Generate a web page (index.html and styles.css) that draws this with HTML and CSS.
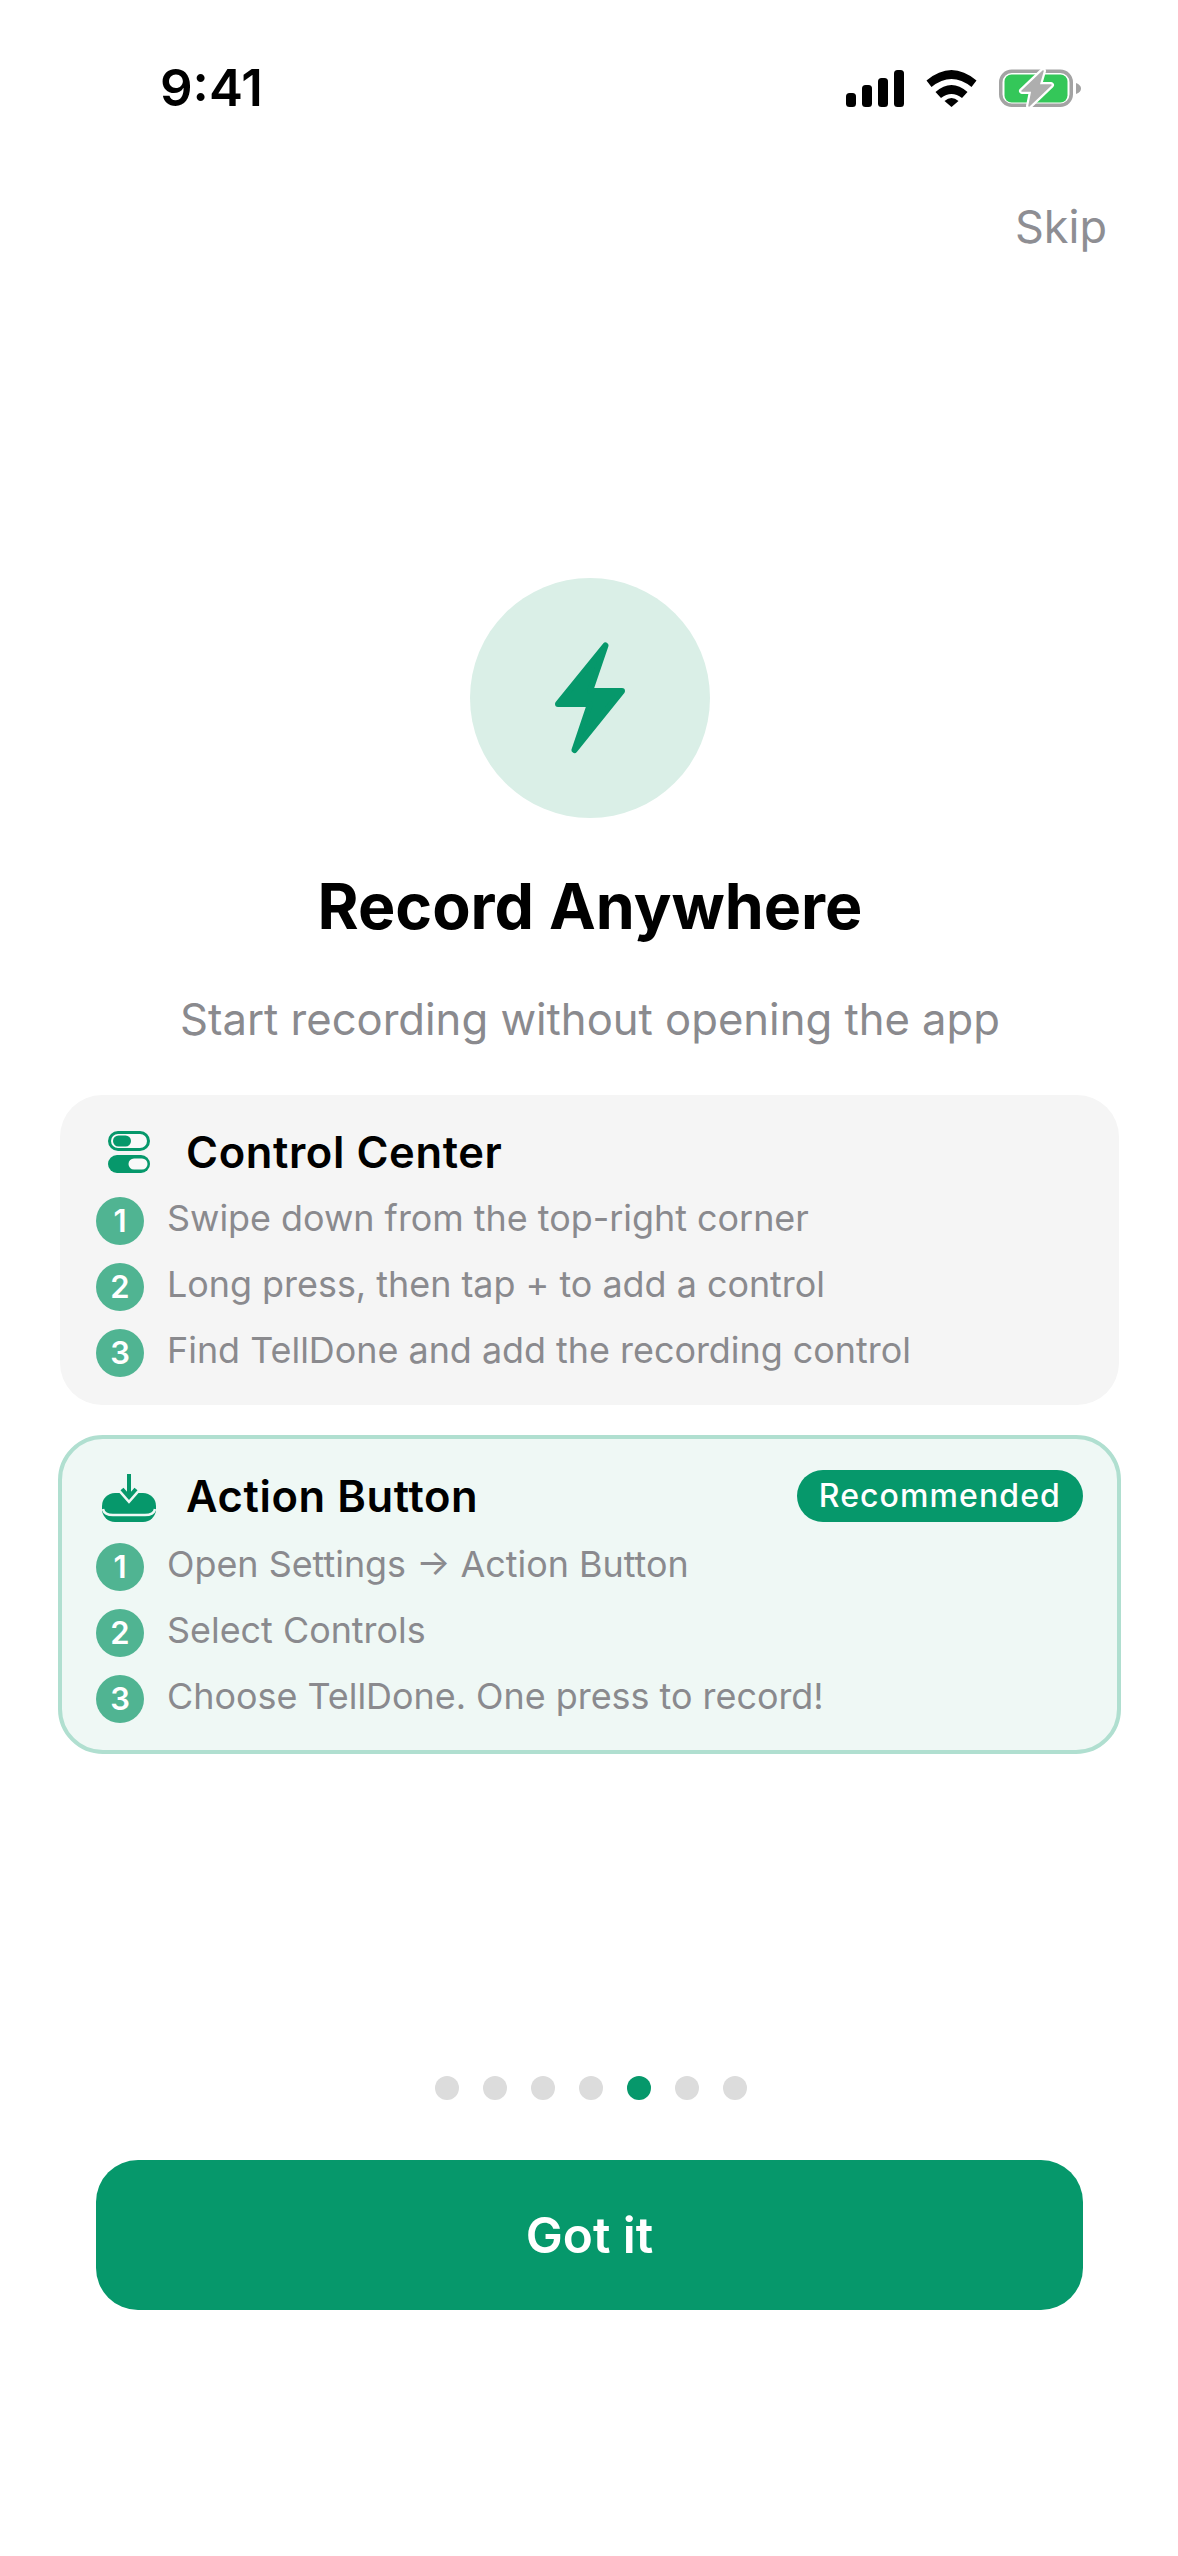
FILE: index.html
```html
<!DOCTYPE html>
<html>
<head>
	<title>Record Anywhere</title>
	<link rel="stylesheet" href="styles.css">
</head>
<body>
	<div id="page">
		<div class="status">
			<span class="time">9:41</span>
			<div class="status-icons">
				<svg class="signal" width="58" height="37" viewBox="0 0 58 37">
					<rect x="0" y="23" width="10" height="14" rx="3.5"/>
					<rect x="16" y="15" width="10" height="22" rx="3.5"/>
					<rect x="32" y="8" width="10" height="29" rx="3.5"/>
					<rect x="48" y="0" width="10" height="37" rx="3.5"/>
				</svg>
				<svg class="wifi" width="51" height="37" viewBox="0 0 51 37">
					<path d="M0.5 10.5 Q25.5 -10.5 50.5 10.5 L45.5 17 Q25.5 1 5.5 17 Z"/>
					<path d="M9.5 22 Q25.5 8 41.5 22 L36 28 Q25.5 20 15 28 Z"/>
					<path d="M18.5 31 Q25.5 25 32.5 31 L25.5 37 Z"/>
				</svg>
				<svg class="battery" width="82" height="41" viewBox="0 0 82 41">
					<rect x="1.75" y="3.25" width="70.5" height="34" rx="11" fill="none" stroke="#a3a3a3" stroke-width="3.5"/>
					<rect x="5.5" y="6.5" width="63" height="28" rx="7" fill="#34c759"/>
					<path d="M77 15 Q82 17 82 20.5 Q82 24 77 26 Z" fill="#a3a3a3"/>
					<path d="M44 3 L23 23 H33 L30 38 L52 17 H40 Z" fill="none" stroke="#fff" stroke-width="6" stroke-linejoin="round"/>
					<path d="M44 3 L23 23 H33 L30 38 L52 17 H40 Z" fill="#aeaeae" stroke="#aeaeae" stroke-width="1.5" stroke-linejoin="round"/>
				</svg>
			</div>
		</div>

		<div class="skip-row"><a class="skip">Skip</a></div>

		<div class="hero-icon">
			<svg width="70" height="112" viewBox="0 0 70 112">
				<path d="M50.5 3.5 L35 49 H67 L19.5 108 L35 62 H3 Z" fill="#06986b" stroke="#06986b" stroke-width="6" stroke-linejoin="round"/>
			</svg>
		</div>

		<h1 class="title">Record Anywhere</h1>
		<p class="subtitle">Start recording without opening the app</p>

		<div class="cards">
			<div class="card">
				<div class="card-head">
					<div class="card-icon">
						<svg width="42" height="42" viewBox="0 0 42 42">
							<rect x="1.5" y="1.5" width="39" height="17" rx="8.5" fill="#f9f9f9" stroke="#06986b" stroke-width="3"/>
							<rect x="5" y="4.5" width="18" height="11" rx="5.5" fill="#06986b"/>
							<rect x="0" y="24" width="42" height="18" rx="9" fill="#06986b"/>
							<rect x="20.5" y="27.5" width="19" height="11" rx="5.5" fill="#f9f9f9"/>
						</svg>
					</div>
					<span class="card-title">Control Center</span>
				</div>
				<ol class="steps">
					<li><span class="num">1</span><span class="step-text">Swipe down from the top-right corner</span></li>
					<li><span class="num">2</span><span class="step-text">Long press, then tap + to add a control</span></li>
					<li><span class="num">3</span><span class="step-text">Find TellDone and add the recording control</span></li>
				</ol>
			</div>

			<div class="card card-action">
				<div class="card-head">
					<div class="card-icon">
						<svg width="54" height="48" viewBox="0 0 54 48">
							<rect x="0" y="19" width="54" height="29" rx="13" fill="#06986b"/>
							<path d="M1 35 Q2 41 11 41 H43 Q52 41 53 35" fill="none" stroke="#eff8f5" stroke-width="2.5"/>
							<path d="M20 15 L27 23 L34 15" fill="none" stroke="#eff8f5" stroke-width="9"/>
							<path d="M27 0 V24 M20 15 L27 23 L34 15" fill="none" stroke="#06986b" stroke-width="4"/>
						</svg>
					</div>
					<span class="card-title">Action Button</span>
					<span class="badge">Recommended</span>
				</div>
				<ol class="steps">
					<li><span class="num">1</span><span class="step-text">Open Settings → Action Button</span></li>
					<li><span class="num">2</span><span class="step-text">Select Controls</span></li>
					<li><span class="num">3</span><span class="step-text">Choose TellDone. One press to record!</span></li>
				</ol>
			</div>
		</div>

		<div class="dots">
			<span class="dot"></span>
			<span class="dot"></span>
			<span class="dot"></span>
			<span class="dot"></span>
			<span class="dot active"></span>
			<span class="dot"></span>
			<span class="dot"></span>
		</div>

		<button class="got-it">Got it</button>
	</div>
</body>
</html>
```

FILE: styles.css
```css
* {
	padding: 0px;
	margin: 0px;
	box-sizing: border-box;
}

body {
	background-color: #ffffff;
	font-family: Inter, "Liberation Sans", sans-serif;
}

#page {
	width: 1178px;
	height: 2556px;
	display: flex;
	flex-direction: column;
	align-items: center;
	padding: 60px 58px 246px 60px;
}

.status {
	align-self: stretch;
	height: 56px;
	display: flex;
	justify-content: space-between;
	align-items: center;
	padding: 0 39px 0 100px;
}

.time {
	font-size: 51px;
	line-height: 56px;
	font-weight: 600;
	color: #000000;
}

.status-icons {
	display: flex;
	align-items: center;
}

.signal, .wifi {
	fill: #000000;
}

.wifi {
	margin: 0 22px;
}

.skip-row {
	align-self: stretch;
	display: flex;
	justify-content: flex-end;
	margin-top: 81px;
	padding-right: 13px;
}

.skip {
	font-size: 45px;
	line-height: 60px;
	color: #8e8e93;
}

.hero-icon {
	width: 240px;
	height: 240px;
	margin-top: 321px;
	border-radius: 50%;
	background-color: #daefe7;
	display: flex;
	justify-content: center;
	align-items: center;
}

.title {
	margin-top: 48px;
	font-size: 62.7px;
	line-height: 80px;
	font-weight: 700;
	color: #000000;
}

.subtitle {
	margin-top: 44px;
	font-size: 43.6px;
	line-height: 60px;
	color: #8a8a8e;
}

.cards {
	align-self: stretch;
	margin-top: 45px;
	display: flex;
	flex-direction: column;
	gap: 30px;
}

.card {
	margin-right: 1px;
	background-color: #f5f5f5;
	border-radius: 42px;
	padding: 27px 36px 28px;
}

.card-action {
	margin: 0 -1px 0 -2px;
	padding: 27px 34px 27px 34px;
	background-color: #eff8f5;
	border: 4px solid #b0dfd0;
	border-radius: 45px;
}

.card-head {
	height: 60px;
	display: flex;
	align-items: center;
	margin-bottom: 15px;
}

.card-action .card-head {
	margin-bottom: 17px;
}

.card-icon {
	width: 66px;
	margin-right: 24px;
	display: flex;
	justify-content: center;
}

.card-action .card-icon {
	margin-top: 4px;
}

.card-title {
	font-size: 43.5px;
	letter-spacing: 0.6px;
	font-weight: 600;
	color: #000000;
}

.badge {
	margin-left: auto;
	height: 52px;
	line-height: 52px;
	padding: 0 22px;
	border-radius: 26px;
	background-color: #06986b;
	color: #ffffff;
	font-size: 32px;
	letter-spacing: 1.1px;
	font-weight: 500;
}

.steps {
	list-style: none;
	display: flex;
	flex-direction: column;
	gap: 18px;
}

.steps li {
	height: 48px;
	display: flex;
	align-items: center;
	font-size: 35.9px;
	color: #8a8a8e;
}

.step-text {
	margin-bottom: 6px;
}

.num {
	width: 48px;
	height: 48px;
	margin-right: 23px;
	flex-shrink: 0;
	border-radius: 50%;
	background-color: #50b492;
	color: #ffffff;
	font-size: 31px;
	font-weight: 600;
	text-align: center;
	line-height: 48px;
}

.dots {
	margin-top: auto;
	padding-left: 2px;
	display: flex;
	gap: 24px;
}

.dot {
	width: 24px;
	height: 24px;
	border-radius: 50%;
	background-color: #dcdcdc;
}

.dot.active {
	background-color: #06986b;
}

.got-it {
	align-self: stretch;
	margin: 60px 37px 0 36px;
	height: 150px;
	border: none;
	border-radius: 42px;
	background-color: #06986b;
	color: #ffffff;
	font-family: inherit;
	font-size: 49.5px;
	font-weight: 600;
}
```
